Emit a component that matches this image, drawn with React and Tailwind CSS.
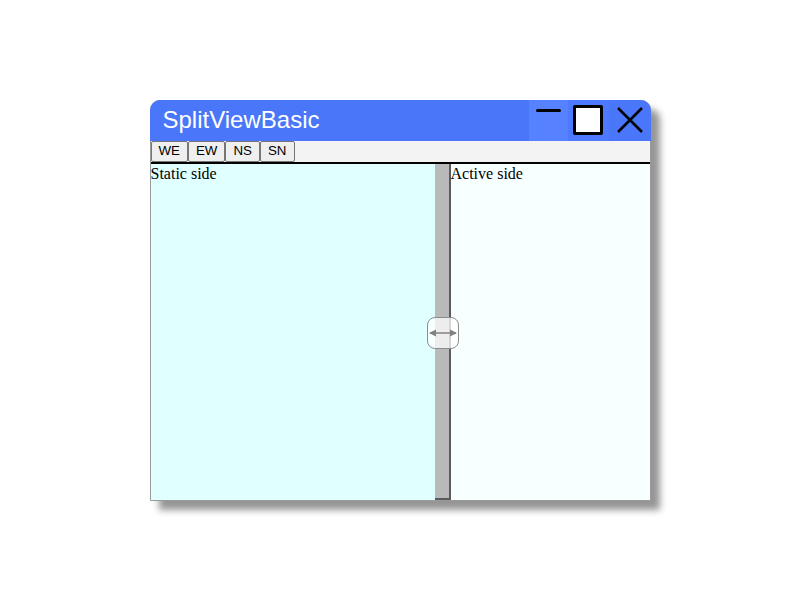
import React from "react";

const buttons = ["WE", "EW", "NS", "SN"];

const App = () => {
  return (
    <div className="w-[800px] h-[600px] bg-white flex items-center justify-center">
      {/* Fenster */}
      <div className="w-[501px] h-[401px] flex flex-col rounded-t-[10px] border border-[#9a9a9a] shadow-[9px_9px_7px_rgba(0,0,0,0.42)] bg-white">
        {/* Titelleiste */}
        <div className="h-[41px] -mx-px -mt-px flex items-stretch bg-[#4a76fa] rounded-t-[10px]">
          <div className="flex-1 pl-[13px] flex items-center text-white text-[24px] leading-none" style={{ fontFamily: "'Liberation Sans', Arial, sans-serif" }}>
            SplitViewBasic
          </div>
          <div className="w-[39px] bg-[#5782ff] flex justify-center pt-[9px]">
            <div className="w-[25px] h-[3px] bg-black rounded-sm" />
          </div>
          <div className="w-[41px] bg-[#4c79fd] flex items-center justify-center">
            <div className="w-[30px] h-[30px] border-[3px] border-black bg-white rounded-[2px]" />
          </div>
          <div className="w-[42px] flex items-center justify-center rounded-tr-[10px]">
            <svg width="28" height="28" viewBox="0 0 28 28">
              <path d="M2 2 L26 26 M26 2 L2 26" stroke="black" strokeWidth="2.5" />
            </svg>
          </div>
        </div>

        {/* Werkzeugleiste */}
        <div className="h-[23px] flex items-stretch bg-[#f3f3f3] border-b-2 border-black" style={{ fontFamily: "'Liberation Sans', Arial, sans-serif" }}>
          {buttons.map((b) => (
            <button
              key={b}
              className="px-[7px] h-[21px] text-[13.33px] leading-none text-black bg-[#efefef] border border-[#767676] rounded-[2px]"
            >
              {b}
            </button>
          ))}
        </div>

        {/* Inhalt */}
        <div className="flex-1 flex relative" style={{ fontFamily: "'Liberation Serif', 'Times New Roman', serif" }}>
          <div className="w-[284px] bg-[#e0ffff] text-[16px] leading-[19px] text-black">Static side</div>
          <div className="w-[16px] bg-[#b9b9b9] border-r-2 border-b-2 border-[#5a5a5a]" />
          <div className="flex-1 bg-[#f8ffff] text-[16px] leading-[19px] text-black">Active side</div>

          <div className="absolute left-[276px] top-[153px] w-[32px] h-[32px] rounded-[8px] border border-[#8c8c8c] bg-white/75 flex items-center justify-center">
            <svg width="30" height="12" viewBox="0 0 30 12">
              <path d="M2 6 H28" stroke="#808080" strokeWidth="1.5" />
              <path d="M1 6 L8 2.5 L8 9.5 Z M29 6 L22 2.5 L22 9.5 Z" fill="#808080" />
            </svg>
          </div>
        </div>
      </div>
    </div>
  );
};

export default App;
